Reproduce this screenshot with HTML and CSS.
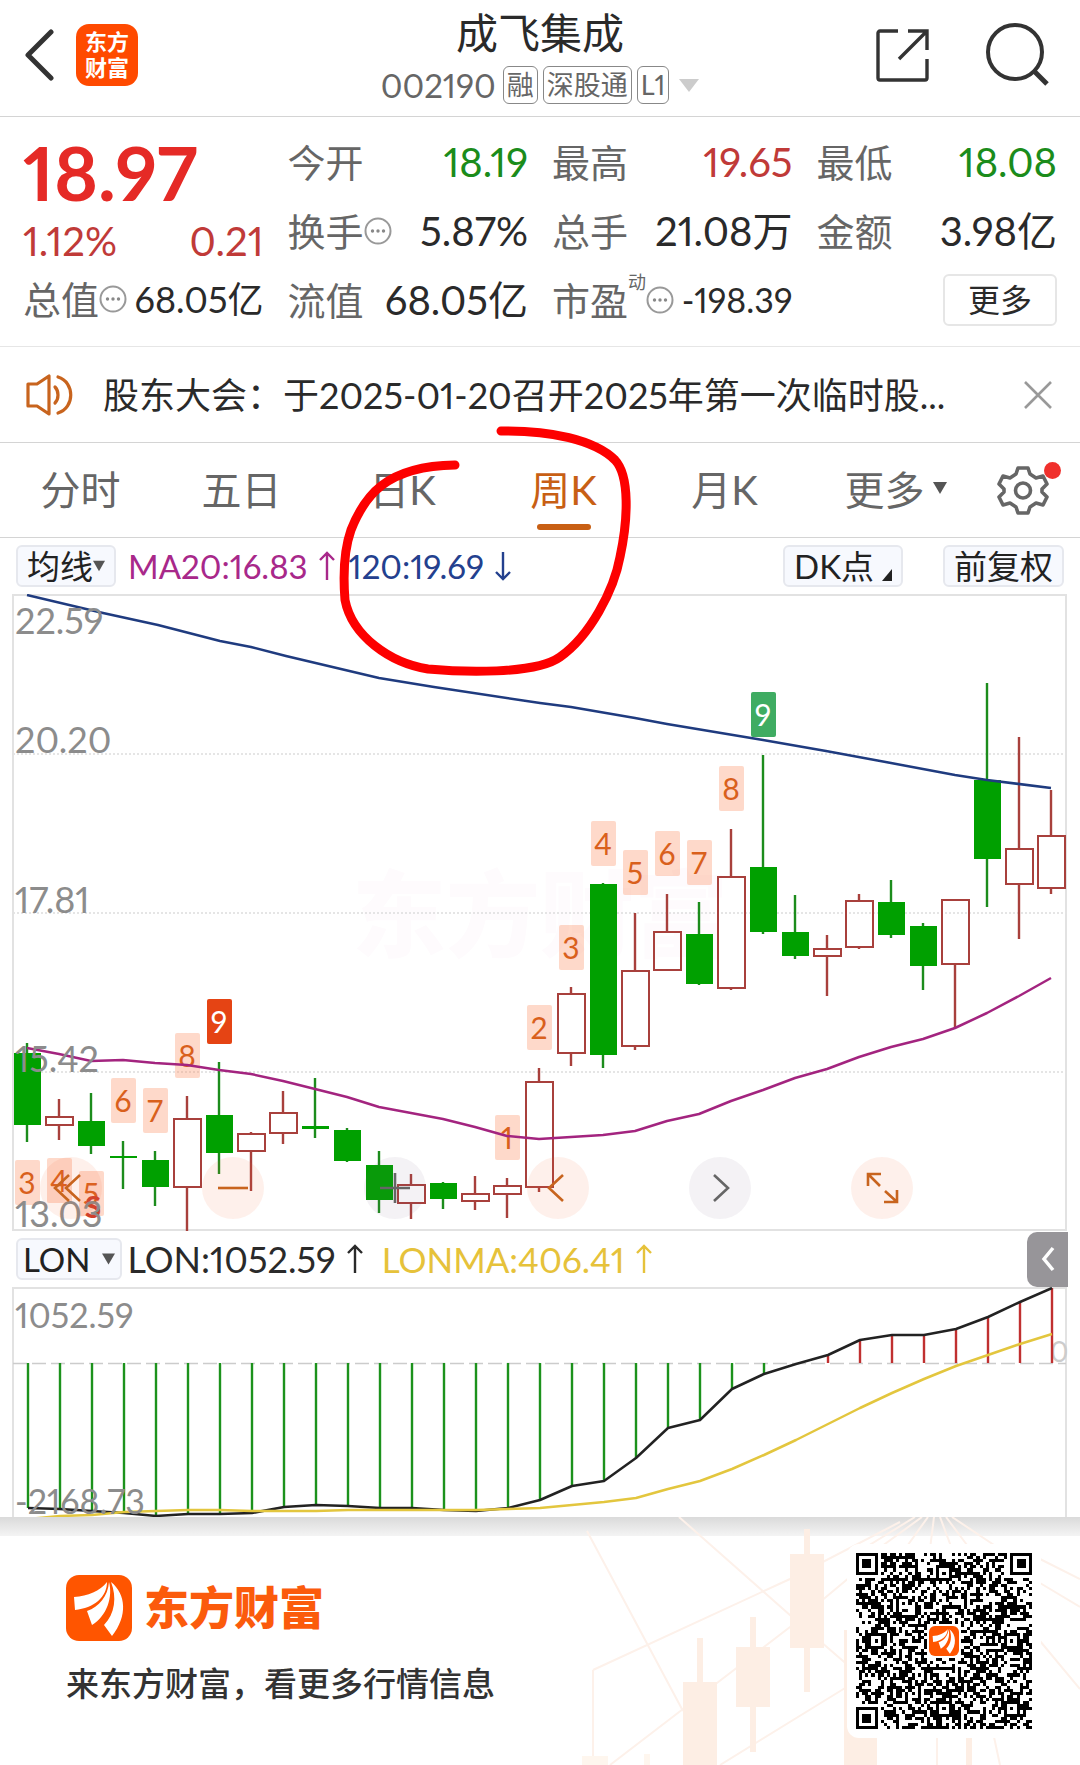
FILE: index.html
```html
<!DOCTYPE html>
<html lang="zh-CN">
<head>
<meta charset="utf-8">
<meta name="viewport" content="width=device-width, initial-scale=1">
<title>成飞集成 002190</title>
<link rel="stylesheet" href="styles.css">
</head>
<body>
<svg class="defs" width="0" height="0" aria-hidden="true">
  <symbol id="info" viewBox="0 0 28 28"><circle cx="14" cy="14" r="12.5" fill="none" stroke="#999" stroke-width="2"/><g fill="#888"><circle cx="8.5" cy="14" r="1.7"/><circle cx="14" cy="14" r="1.7"/><circle cx="19.5" cy="14" r="1.7"/></g></symbol>
  <symbol id="up" viewBox="0 0 18 30"><path d="M9 29V2M2 9l7-7 7 7" fill="none" stroke="currentColor" stroke-width="2.4"/></symbol>
  <symbol id="down" viewBox="0 0 18 30"><path d="M9 1v27M2 21l7 7 7-7" fill="none" stroke="currentColor" stroke-width="2.4"/></symbol>
  <symbol id="mark" viewBox="0 0 66 66"><rect width="66" height="66" rx="13" fill="#ff5500"/><g fill="#fff"><path d="M8 22C22 21 34 16 41 7C41 22 28 33 9 35Z"/><path d="M43 7C47 22 41 41 26 50L21 36C33 32 42 21 43 7Z"/><path d="M45 7C60 19 62 41 46 61L38 50C49 39 51 22 45 7Z"/></g></symbol>
</svg>

<header class="topbar">
  <div class="topbar-side">
    <button class="icon-btn" aria-label="返回"><svg width="30" height="52" viewBox="0 0 30 52"><path d="M27 3L4 26L27 49" fill="none" stroke="#333" stroke-width="5" stroke-linecap="round" stroke-linejoin="round"/></svg></button>
    <a class="app-logo" href="#"><span>东方</span><span>财富</span></a>
  </div>
  <div class="topbar-title">
    <h1>成飞集成</h1>
    <div class="code-line">
      <span class="code">002190</span>
      <span class="tag">融</span><span class="tag">深股通</span><span class="tag">L1</span>
      <svg class="code-caret" width="20" height="13" viewBox="0 0 20 13"><path d="M0 0h20L10 13z" fill="#ccc"/></svg>
    </div>
  </div>
  <div class="topbar-side topbar-actions">
    <button class="icon-btn" aria-label="分享"><svg width="54" height="54" viewBox="0 0 54 54"><path d="M22 3H4a2 2 0 0 0-2 2v45a2 2 0 0 0 2 2h45a2 2 0 0 0 2-2V31M32 3h19v19M50 4L23 31" fill="none" stroke="#333" stroke-width="3.4"/></svg></button>
    <button class="icon-btn" aria-label="搜索"><svg width="64" height="64" viewBox="0 0 64 64"><circle cx="29" cy="29" r="27" fill="none" stroke="#333" stroke-width="4"/><path d="M48 48L61 61" stroke="#333" stroke-width="5"/></svg></button>
  </div>
</header>

<main>
<section class="quote">
  <div class="quote-main">
    <div class="price">18.97</div>
    <div class="cell up"><span class="value">1.12%</span><span class="value">0.21</span></div>
    <div class="cell"><span class="label">总值<svg class="info"><use href="#info"/></svg></span><span class="value mid">68.05亿</span></div>
  </div>
  <div class="quote-col">
    <div class="cell"><span class="label">今开</span><span class="value down">18.19</span></div>
    <div class="cell"><span class="label">换手<svg class="info"><use href="#info"/></svg></span><span class="value">5.87%</span></div>
    <div class="cell"><span class="label">流值</span><span class="value">68.05亿</span></div>
  </div>
  <div class="quote-col">
    <div class="cell"><span class="label">最高</span><span class="value up">19.65</span></div>
    <div class="cell"><span class="label">总手</span><span class="value">21.08万</span></div>
    <div class="cell"><span class="label">市盈<sup>动</sup><svg class="info"><use href="#info"/></svg></span><span class="value small">-198.39</span></div>
  </div>
  <div class="quote-col">
    <div class="cell"><span class="label">最低</span><span class="value down">18.08</span></div>
    <div class="cell"><span class="label">金额</span><span class="value">3.98亿</span></div>
    <div class="cell cell-end"><button class="more-btn">更多</button></div>
  </div>
</section>

<section class="notice">
  <svg width="50" height="42" viewBox="0 0 50 42" fill="none" stroke="#c8641e" stroke-width="3.2" stroke-linejoin="round"><path d="M2 10h9L23 2v38L11 32H2zM23 2v38"/><path d="M29 13c4 4 4 12 0 16M32 3c17 5 17 31 0 36" stroke-linecap="round"/></svg>
  <a href="#">股东大会：于2025-01-20召开2025年第一次临时股...</a>
  <button class="icon-btn" aria-label="关闭"><svg width="28" height="28" viewBox="0 0 28 28"><path d="M1 1l26 26M27 1L1 27" stroke="#999" stroke-width="2.6"/></svg></button>
</section>

<nav class="tabs">
  <a href="#">分时</a>
  <a href="#">五日</a>
  <a href="#">日K</a>
  <a href="#" class="active" aria-current="page">周K</a>
  <a href="#">月K</a>
  <a href="#" class="more-tab">更多<svg class="caret" width="14" height="12" viewBox="0 0 14 12"><path d="M0 0h14L7 12z" fill="#555"/></svg></a>
  <button class="icon-btn settings" aria-label="设置"><svg width="60" height="60" viewBox="0 0 60 60"><g fill="none" stroke="#666" stroke-width="3.6" stroke-linejoin="round"><path d="M25 8h10l2 6 6 4 7-2 4 8-5 5v3l5 5-4 8-7-2-6 4-2 6H25l-2-6-6-4-7 2-4-8 5-5v-3l-5-5 4-8 7 2 6-4z"/><circle cx="30" cy="30.500" r="7.500"/></g></svg><i class="dot"></i></button>
</nav>

<div class="toolbar">
  <button class="pill">均线<svg class="caret" width="12" height="12" viewBox="0 0 14 12"><path d="M0 0h14L7 12z" fill="#555"/></svg></button>
  <span class="ind ma20">MA20:16.83<svg class="arrow"><use href="#up"/></svg></span>
  <span class="ind ma120">120:19.69<svg class="arrow"><use href="#down"/></svg></span>
  <button class="pill dk">DK点<svg width="10" height="12" viewBox="0 0 10 12"><path d="M10 0v12H0z" fill="#222"/></svg></button>
  <button class="pill">前复权</button>
</div>

<div class="chart">
  <svg id="kline" viewBox="12 594 1056 637" role="img" aria-label="周K线">
    <text class="watermark" x="352" y="950">东方财富</text>
    <path d="M13 754H1066M13 913H1066M13 1072H1066" stroke="#ddd" stroke-width="1.500" stroke-dasharray="2 2"/>
    <rect x="13" y="595" width="1053" height="635" fill="none" stroke="#e2e2e2" stroke-width="2"/>
    <g id="candles"></g>
    <polyline class="line" stroke="#1f3b7f" points="27,595 103,613 158,625 220,641 251,647 286,656 379,678 434,687 540,703 571,707 635,718 667,724 763,740 826,751 891,763 955,775 987,780 1051,788"/>
    <g id="badges"></g>
    <polyline class="line" stroke="#a3247f" points="27,1048 59,1054 91,1061 123,1060 155,1063 187,1065 219,1070 251,1074 283,1081 315,1089 347,1097 379,1107 411,1113 443,1119 475,1127 507,1136 539,1139 571,1137 603,1135 635,1131 667,1121 699,1114 731,1101 763,1090 795,1078 827,1069 859,1057 891,1047 923,1039 955,1028 987,1013 1019,996 1051,978"/>
    <text class="sell" x="93" y="1218">S</text>
    <g class="axis"><text x="15" y="634">22.59</text><text x="15" y="753">20.20</text><text x="15" y="913">17.81</text><text x="15" y="1072">15.42</text><text x="15" y="1227">13.03</text></g>
  </svg>
  <div class="controls">
    <button aria-label="快退"><svg viewBox="0 0 62 62"><path d="M29 18L15 31l14 13M40 18L26 31l14 13"/></svg></button>
    <button aria-label="缩小"><svg viewBox="0 0 62 62"><path d="M16 31h30"/></svg></button>
    <button class="gray" aria-label="放大"><svg viewBox="0 0 62 62"><path d="M16 31h30M31 16v30"/></svg></button>
    <button aria-label="左移"><svg viewBox="0 0 62 62"><path d="M36 18L22 31l14 13"/></svg></button>
    <button class="gray" aria-label="右移"><svg viewBox="0 0 62 62"><path d="M25 18l14 13-14 13"/></svg></button>
    <button aria-label="全屏"><svg viewBox="0 0 62 62"><path d="M17 29V17h13M17 17l12 12M46 33v12H33M46 45L34 34"/></svg></button>
  </div>
</div>

<div class="toolbar toolbar-lon">
  <button class="pill lon">LON<svg class="caret" width="13" height="12" viewBox="0 0 14 12"><path d="M0 0h14L7 12z" fill="#555"/></svg></button>
  <span class="ind big">LON:1052.59<svg class="arrow"><use href="#up"/></svg></span>
  <span class="ind lonma">LONMA:406.41<svg class="arrow"><use href="#up"/></svg></span>
  <button class="side-tab" aria-label="展开"><svg width="14" height="26" viewBox="0 0 14 26"><path d="M12 2L3 13l9 11" fill="none" stroke="#fff" stroke-width="3.500"/></svg></button>
</div>

<div class="chart">
  <svg id="lon" viewBox="12 1287 1056 230" role="img" aria-label="LON指标">
    <path d="M13 1517V1288H1066V1517" fill="none" stroke="#e2e2e2" stroke-width="2"/>
    <path d="M13 1363.500H1066" stroke="#ccc" stroke-width="1.500" stroke-dasharray="14 5"/>
    <text class="zero" x="1050" y="1362">0</text>
    <g id="lon-body"></g>
    <g class="axis small"><text x="15" y="1328">1052.59</text><text x="15" y="1514">-2168.73</text></g>
  </svg>
</div>
</main>

<footer class="promo">
  <svg class="promo-art" viewBox="0 0 520 248" aria-hidden="true">
    <g fill="none" stroke="#fdf1ea" stroke-width="2"><path d="M27 14L123 194M33 153L230 62L340 5M119 0L231 99L290 150M50 248L123 192L230 110L290 60M160 248L290 168M33 153V248M480 42L520 62M480 66L520 90M480 124L520 172M355 0L290 40M362 0L318 32M368 0L345 32M374 0L370 32M380 0L392 32M386 0L410 32M392 0L440 32M377 220V248M434 220l6 28"/></g>
    <g fill="#fdeee4"><path d="M230 37h34v94h-34zM244 12h6v26h-6zM244 130h6v45h-6zM176 130h34v60h-34zM190 100h6v31h-6zM190 190h6v45h-6zM123 165h34v83h-34zM137 121h6v45h-6zM284 130h33v118h-33zM284 113h5v20h-5zM406 221h6v27h-6z"/></g>
    <path fill="#fef6ee" d="M22 239h26v9H22zM84 237h6v11h-6z"/>
  </svg>
  <div class="promo-text">
    <div class="brand"><svg width="66" height="66"><use href="#mark"/></svg><span>东方财富</span></div>
    <p>来东方财富，看更多行情信息</p>
  </div>
  <div class="qr">
    <svg id="qr" viewBox="0 0 57 57" role="img" aria-label="二维码" shape-rendering="crispEdges"></svg>
    <svg class="qr-mark"><use href="#mark"/></svg>
  </div>
</footer>

<svg class="scribble" width="300" height="260" viewBox="335 420 300 260" aria-hidden="true">
  <path d="M501 431C550 430 595 440 615 460C630 476 628 520 620 557C614 590 590 636 560 657C535 675 460 672 428 669C390 663 352 636 345 600C343 575 344 550 351 530C364 497 385 466 455 465" fill="none" stroke="#fd0000" stroke-width="9" stroke-linecap="round"/>
</svg>
<script src="chart.js"></script>
</body>
</html>
```
FILE: styles.css
```css
* { box-sizing: border-box; }

body {
  margin: 0;
  position: relative;
  background: #fff;
  color: #2a2a2a;
  font-family: Lato, "Noto Sans CJK SC", sans-serif;
  font-variant-numeric: proportional-nums;
}

button {
  font: inherit;
  color: inherit;
  padding: 0;
  border: 0;
  background: none;
}

a { color: inherit; text-decoration: none; }
svg { display: block; flex: none; }
.defs { position: absolute; }

.icon-btn {
  display: flex;
  align-items: center;
  justify-content: center;
}

/* header */
.topbar {
  display: grid;
  grid-template-columns: 1fr auto 1fr;
  height: 117px;
  border-bottom: 1px solid #d4d4d4;
}

.topbar-side {
  display: flex;
  align-items: center;
  gap: 22px;
  padding: 0 24px 6px;
}

.topbar-actions {
  justify-content: flex-end;
  gap: 56px;
  padding-right: 30px;
}

.app-logo {
  display: flex;
  flex-direction: column;
  align-items: center;
  justify-content: center;
  width: 62px;
  height: 62px;
  border-radius: 13px;
  background: #ff4a00;
  color: #fff;
  font-size: 22px;
  font-weight: 700;
  line-height: 26px;
}

.topbar-title { text-align: center; }

h1 {
  margin: 0;
  padding-top: 2px;
  font-size: 42px;
  font-weight: 400;
  line-height: 62px;
}

.code-line {
  display: flex;
  align-items: center;
  justify-content: center;
  gap: 5px;
  height: 42px;
  color: #666;
}

.code { margin-right: 2px; font-size: 33px; }

.tag {
  height: 38px;
  padding: 0 3px;
  border: 1px solid #888;
  border-radius: 6px;
  font-size: 27px;
  line-height: 35px;
}

.code-caret { margin-left: 5px; }

/* quote panel */
.quote {
  display: grid;
  grid-template-columns: repeat(4, 1fr);
  column-gap: 24px;
  height: 230px;
  padding: 10px 23px 12px;
  border-bottom: 1px solid #e6e6e6;
}

.quote-main { padding-top: 5px; }

.price {
  color: #e52a26;
  font-size: 75px;
  font-weight: 700;
  line-height: 80px;
}

.cell {
  display: flex;
  align-items: center;
  justify-content: space-between;
  height: 69px;
  white-space: nowrap;
}

.quote-main .cell { height: 58px; }
.cell-end { justify-content: flex-end; }

.label {
  display: flex;
  align-items: center;
  color: #666;
  font-size: 38px;
  line-height: 56px;
}

.label sup {
  align-self: flex-start;
  font-size: 18px;
  line-height: 20px;
}

.info { width: 28px; height: 28px; }
.value { font-size: 40px; line-height: 56px; }
.value.mid { font-size: 36px; }
.value.small { font-size: 34px; }
.up { color: #c03a38; }
.down { color: #1b8c1b; }

.more-btn {
  width: 114px;
  height: 52px;
  border: 2px solid #e6e6e6;
  border-radius: 6px;
  font-size: 32px;
  line-height: 46px;
}

/* announcement */
.notice {
  display: flex;
  align-items: center;
  height: 96px;
  padding: 0 28px 0 26px;
  border-bottom: 1px solid #d4d4d4;
}

.notice a {
  flex: 1;
  margin-left: 27px;
  padding-bottom: 4px;
  font-size: 36px;
  white-space: nowrap;
}

/* period tabs */
.tabs {
  display: grid;
  grid-template-columns: repeat(6, 161fr) 114fr;
  height: 95px;
  border-bottom: 1px solid #d4d4d4;
  color: #666;
  font-size: 40px;
}

.tabs a {
  position: relative;
  display: flex;
  align-items: center;
  justify-content: center;
  padding-bottom: 4px;
}

.tabs .active { color: #c85f14; }

.tabs .active::after {
  content: "";
  position: absolute;
  bottom: 7px;
  width: 54px;
  height: 6px;
  border-radius: 3px;
  background: #c85f14;
}

.tabs .more-tab { gap: 8px; padding-left: 20px; }
.settings { position: relative; }

.dot {
  position: absolute;
  top: 19px;
  right: 19px;
  width: 17px;
  height: 17px;
  border-radius: 50%;
  background: #f0302c;
}

/* indicator bars */
.toolbar {
  display: flex;
  align-items: center;
  height: 56px;
  padding: 0 16px;
}

.pill {
  display: flex;
  align-items: center;
  justify-content: center;
  height: 42px;
  padding: 0 9px;
  border: 2px solid #e6e8ee;
  border-radius: 6px;
  background: #f7f9fe;
  color: #222;
  font-size: 33px;
  line-height: 36px;
}

.dk { gap: 8px; margin-left: auto; margin-right: 40px; }
.dk svg { align-self: flex-end; margin-bottom: 4px; }

.ind {
  display: flex;
  align-items: center;
  gap: 10px;
  font-size: 33px;
}

.arrow { width: 18px; height: 30px; }
.ma20 { margin-left: 12px; color: #a8288a; }
.ma120 { margin-left: 13px; color: #23408e; }
.big { font-size: 36px; }
.toolbar-lon { padding-right: 12px; }
.lon { gap: 12px; padding: 0 5px; }
.lon + .ind { margin-left: 5px; }
.lonma { margin-left: 18px; color: #e6c23a; font-size: 35px; }

.side-tab {
  display: flex;
  align-items: center;
  justify-content: center;
  width: 41px;
  height: 55px;
  margin-left: auto;
  border-radius: 10px 0 0 10px;
  background: #979599;
}

/* charts */
.chart { position: relative; padding: 0 12px; }
.chart > svg { width: 100%; height: auto; }
.line { fill: none; stroke-width: 2.5; stroke-linejoin: round; }
.axis { fill: #8c8c8c; font-size: 36px; }
.axis.small { font-size: 34px; }
.zero { fill: #ccc; font-size: 28px; }
.watermark { fill: #fefbfd; font-size: 94px; font-weight: 900; }
.sell { fill: #d0402a; font-size: 30px; font-weight: 700; text-anchor: middle; }
.badge { font-size: 30px; text-anchor: middle; }

.controls {
  position: absolute;
  left: 40px;
  right: 167px;
  bottom: 12px;
  display: flex;
  justify-content: space-between;
}

.controls button {
  width: 62px;
  height: 62px;
  border-radius: 50%;
  background: rgba(250, 110, 60, 0.1);
}

.controls path { fill: none; stroke: #c8641e; stroke-width: 2.6; }
.controls .gray { background: rgba(120, 90, 130, 0.08); }
.controls .gray path { stroke: #666; }

/* promo strip */
.promo {
  position: relative;
  display: flex;
  justify-content: space-between;
  height: 248px;
  padding: 27px 39px 0 66px;
  background: linear-gradient(#dadada, #f4f4f4 19px, #fff 19px);
}

.promo-art {
  position: absolute;
  top: 0;
  right: 0;
  width: 520px;
  height: 248px;
}

.promo-text { padding-top: 31px; }

.brand {
  display: flex;
  align-items: center;
  gap: 12px;
  color: #fb5b0c;
  font-size: 45px;
  font-weight: 900;
  line-height: 66px;
}

.promo p {
  margin: 18px 0 0;
  color: #333;
  font-size: 33px;
  font-weight: 500;
  line-height: 48px;
}

.qr {
  position: relative;
  width: 194px;
  height: 194px;
  padding: 9px;
  border-radius: 12px;
  background: #fff;
}

.qr-mark {
  position: absolute;
  top: 80px;
  left: 80px;
  width: 34px;
  height: 34px;
  border: 2px solid #fff;
  background: #fff;
}

/* hand-drawn ring round the active tab */
.scribble {
  position: absolute;
  top: 420px;
  left: 335px;
  pointer-events: none;
}
```
FILE: chart.js
```js
const FIRST_X = 27;
const STEP = 32;
const GREEN = '#00a000';
const RED = '#a8403c';
const xAt = i => FIRST_X + STEP * i;

// direction, high, body top, body bottom, low
const candles = [
  ['g', 1043, 1053, 1125, 1142], ['r', 1099, 1117, 1125, 1140], ['g', 1093, 1121, 1146, 1154],
  ['g', 1141, 1156, 1158, 1189], ['g', 1151, 1160, 1187, 1206], ['r', 1096, 1119, 1187, 1231],
  ['g', 1062, 1115, 1153, 1174], ['r', 1132, 1134, 1151, 1191], ['r', 1091, 1113, 1133, 1144],
  ['g', 1078, 1126, 1129, 1138], ['g', 1128, 1130, 1161, 1162], ['g', 1151, 1165, 1200, 1213],
  ['r', 1174, 1185, 1203, 1219], ['g', 1182, 1183, 1199, 1209], ['r', 1176, 1194, 1201, 1210],
  ['r', 1178, 1186, 1194, 1218], ['r', 1068, 1082, 1187, 1192], ['r', 987, 994, 1053, 1066],
  ['g', 883, 884, 1055, 1068], ['r', 913, 971, 1046, 1050], ['r', 894, 932, 970, 971],
  ['g', 902, 934, 984, 985], ['r', 829, 877, 988, 990], ['g', 755, 867, 932, 934],
  ['g', 895, 932, 956, 959], ['r', 935, 949, 956, 996], ['r', 894, 901, 947, 949],
  ['g', 880, 902, 935, 938], ['g', 923, 926, 966, 990], ['r', 899, 900, 964, 1028],
  ['g', 683, 780, 859, 907], ['r', 737, 849, 884, 939], ['r', 790, 836, 888, 894]
];

// candle index, digit, top
const badges = [
  [0, 3, 1160], [1, 4, 1158], [2, 5, 1171], [3, 6, 1078], [4, 7, 1088], [5, 8, 1033],
  [6, 9, 999, '#e54414'], [15, 1, 1115], [16, 2, 1005], [17, 3, 925], [18, 4, 821],
  [19, 5, 850], [20, 6, 831], [21, 7, 840], [22, 8, 766], [23, 9, 692, '#3fac62']
];

document.getElementById('candles').innerHTML = candles.map(([dir, high, top, bottom, low], i) => {
  const x = xAt(i);
  if (dir === 'g') {
    return `<path d="M${x} ${high}V${low}" stroke="#1c8c1c" stroke-width="2.4"/>` +
      `<rect x="${x - 13}" y="${top}" width="27" height="${bottom - top}" fill="${GREEN}"/>`;
  }
  return `<path d="M${x} ${high}V${top}M${x} ${bottom}V${low}" stroke="${RED}" stroke-width="2.4"/>` +
    `<rect x="${x - 13}" y="${top}" width="27" height="${bottom - top}" fill="none" stroke="${RED}" stroke-width="2"/>`;
}).join('');

document.getElementById('badges').innerHTML = badges.map(([i, digit, top, fill]) =>
  `<rect x="${xAt(i) - 12}" y="${top}" width="25" height="45" rx="2" fill="${fill || '#fb8a5a'}" fill-opacity="${fill ? 1 : 0.32}"/>` +
  `<text class="badge" x="${xAt(i)}" y="${top + 34}" fill="${fill ? '#fff' : '#d9601c'}">${digit}</text>`
).join('');

const ZERO = 1363;
const lon = [1508, 1509, 1511, 1513, 1516, 1514, 1514, 1513, 1507, 1505, 1506, 1508, 1508, 1510, 1511, 1508,
  1500, 1486, 1481, 1458, 1428, 1420, 1389, 1374, 1364, 1355, 1340, 1335, 1335, 1329, 1317, 1302, 1288];
const lonma = [1519, 1516, 1515, 1512, 1511, 1510, 1510, 1511, 1511, 1511, 1510, 1510, 1510, 1510, 1510, 1509,
  1508, 1505, 1502, 1498, 1489, 1481, 1469, 1455, 1440, 1424, 1408, 1393, 1379, 1366, 1355, 1344, 1334];
const points = values => values.map((y, i) => `${xAt(i) + 1},${y}`).join(' ');

document.getElementById('lon-body').innerHTML =
  lon.map((y, i) => i === 24 ? '' :
    `<path d="M${xAt(i) + 1} ${ZERO}V${y}" stroke="${y > ZERO ? '#1c921c' : '#c03030'}" stroke-width="2.4"/>`).join('') +
  `<polyline class="line" stroke="#222" points="${points(lon)}"/>` +
  `<polyline class="line" stroke="#e3c63e" points="${points(lonma)}"/>`;

// 57-module code: finder and alignment patterns over a seeded data area
const SIZE = 57;
let seed = 20190;
const random = () => (seed = (seed * 1103515245 + 12345) % 2147483648) / 2147483648;
const ring = (x, y, cx, cy) => Math.max(Math.abs(x - cx), Math.abs(y - cy));

function isDark(x, y) {
  const noise = random() < 0.5;
  for (const [cx, cy] of [[3, 3], [53, 3], [3, 53]]) {
    const d = ring(x, y, cx, cy);
    if (d <= 4) return d < 2 || d === 3;
  }
  for (const [cx, cy] of [[28, 6], [6, 28], [50, 28], [28, 50], [50, 50]]) {
    const d = ring(x, y, cx, cy);
    if (d <= 2) return d !== 1;
  }
  if (ring(x, y, 28, 28) < 6) return false;
  return noise;
}

let modules = '';
for (let y = 0; y < SIZE; y++) {
  for (let x = 0; x < SIZE; x++) {
    if (isDark(x, y)) modules += `M${x} ${y}h1v1h-1z`;
  }
}
document.getElementById('qr').innerHTML = `<path d="${modules}"/>`;
```
